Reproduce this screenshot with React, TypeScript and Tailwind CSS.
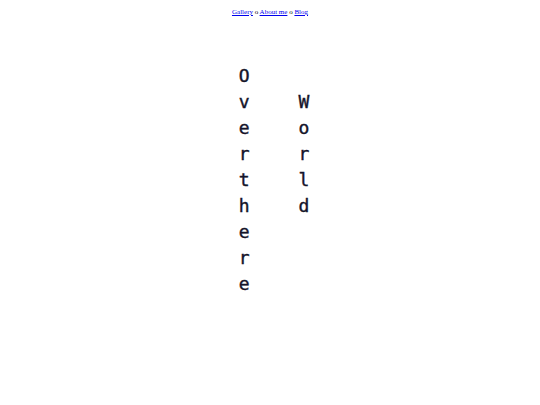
import React from 'react';

const Column: React.FC<{ text: string; offset?: boolean }> = ({ text, offset }) => (
    <div className={`flex flex-col items-center ${offset ? 'pt-[26px]' : ''}`}>
        {text.replace(/ /g, '').split('').map((ch, i) => (
            <span key={i} className="block h-[26px] leading-[26px] text-[18px]">{ch}</span>
        ))}
    </div>
);

export default function App() {
    return (
        <div className="w-[540px] h-[405px] bg-white text-black">
            {/* Nav */}
            <nav className="pt-[8px] text-center text-[7px] leading-[9px] font-['Liberation_Serif',serif]">
                <a href="#" className="text-[#0000ee] underline">Gallery</a>
                <span> o </span>
                <a href="#" className="text-[#0000ee] underline">About me</a>
                <span> o </span>
                <a href="#" className="text-[#0000ee] underline">Blog</a>
            </nav>

            {/* Vertical words */}
            <div className="mt-[46px] flex justify-center gap-[49px] font-['DejaVu_Sans_Mono',monospace] [-webkit-text-stroke:0.4px] text-[#14142a] pl-[8px]">
                <Column text="Over there" />
                <Column text="World" offset />
            </div>
        </div>
    );
}
